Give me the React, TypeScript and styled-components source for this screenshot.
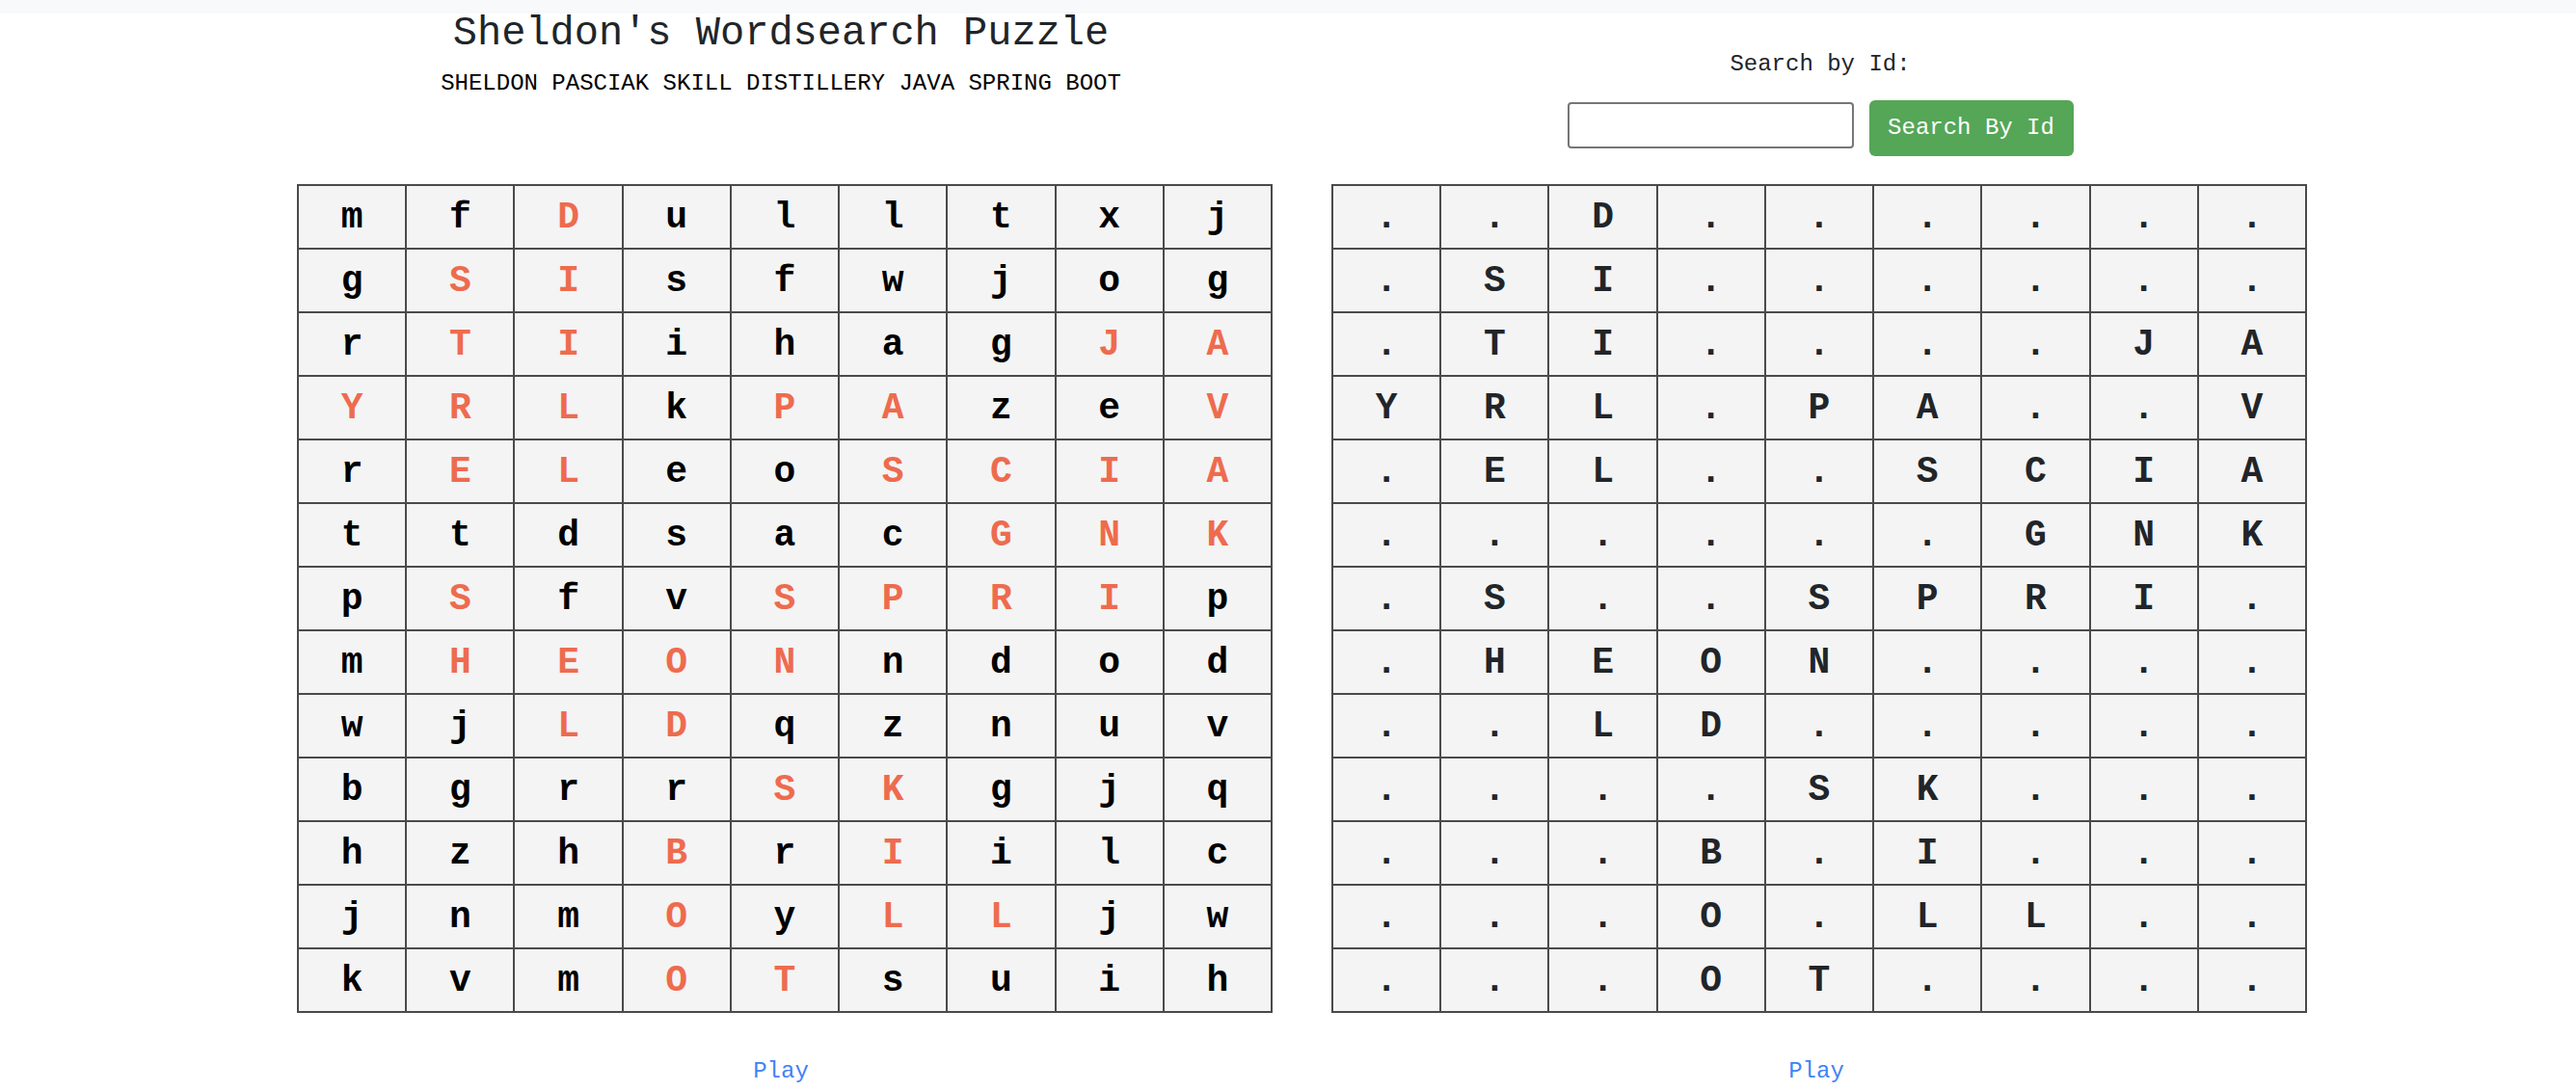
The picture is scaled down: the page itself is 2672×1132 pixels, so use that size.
import React from "react";
import styled, { createGlobalStyle } from "styled-components";

const PUZZLE = [
  "mfDulltxj",
  "gSIsfwjog",
  "rTIihagJA",
  "YRLkPAzeV",
  "rELeoSCIA",
  "ttdsacGNK",
  "pSfvSPRIp",
  "mHEONndod",
  "wjLDqznuv",
  "bgrrSKgjq",
  "hzhBrIilc",
  "jnmOyLLjw",
  "kvmOTsuih",
];

const isWordLetter = (ch: string) => ch !== ch.toLowerCase();

const GlobalStyle = createGlobalStyle`
  body {
    margin: 0;
    background: #fff;
    color: #212529;
    font-family: "Liberation Mono", "Courier New", monospace;
  }
`;

const TopBar = styled.div`
  height: 14px;
  background-color: #f8f9fa;
`;

const Columns = styled.div`
  display: grid;
  grid-template-columns: 1074px 1074px;
  padding-left: 273px;
`;

const Column = styled.section`
  display: flex;
  flex-direction: column;
  align-items: center;
`;

const Header = styled.header<{ $top: number; $shift?: number }>`
  height: 177px;
  box-sizing: border-box;
  padding-top: ${(p) => p.$top}px;
  padding-left: ${(p) => p.$shift ?? 0}px;
  display: flex;
  flex-direction: column;
  align-items: center;
  width: 100%;
`;

const Title = styled.h1`
  margin: 0;
  font-size: 42px;
  font-weight: 400;
  line-height: 1;
  color: #212529;
`;

const Subtitle = styled.p`
  margin: 17px 0 0;
  font-size: 24px;
  line-height: 1.2;
  color: #000;
`;

const Label = styled.label`
  margin-top: 1px;
  font-size: 24px;
  line-height: 1.2;
  color: #212529;
`;

const SearchRow = styled.form`
  display: flex;
  align-items: flex-start;
  gap: 16px;
  margin-top: 22px;
`;

const IdInput = styled.input`
  width: 297px;
  height: 48px;
  margin-top: 2px;
  box-sizing: border-box;
  border: 2px solid #767676;
  border-radius: 4px;
  font-family: inherit;
  font-size: 24px;
`;

const SearchButton = styled.button`
  width: 212px;
  height: 58px;
  border: none;
  border-radius: 6px;
  background-color: #55a656;
  color: #fff;
  font-family: "Liberation Mono", "Courier New", monospace;
  font-size: 24px;
`;

const Board = styled.table<{ $offset: number }>`
  align-self: flex-start;
  margin-left: ${(p) => p.$offset}px;
  width: 1012px;
  table-layout: fixed;
  border-collapse: collapse;
  border: 2px solid #4a4a4a;
`;

const Cell = styled.td<{ $hit: boolean; $solution?: boolean }>`
  height: 64px;
  padding: 0;
  border: 2px solid #4a4a4a;
  background-color: #f4f4f4;
  text-align: center;
  font-size: 38px;
  font-weight: 700;
  color: ${(p) => (p.$solution ? "#212529" : p.$hit ? "#ee6b4e" : "#000")};
`;

const PlayLink = styled.a`
  margin-top: 47px;
  font-size: 24px;
  line-height: 1.2;
  color: #3f83f5;
  text-decoration: none;
`;

const Grid = ({ solution }: { solution?: boolean }) => (
  <Board $offset={solution ? 34 : 35}>
    <tbody>
      {PUZZLE.map((row, r) => (
        <tr key={r}>
          {row.split("").map((ch, c) => {
            const hit = isWordLetter(ch);
            return (
              <Cell key={c} $hit={hit} $solution={solution}>
                {solution ? (hit ? ch : ".") : ch}
              </Cell>
            );
          })}
        </tr>
      ))}
    </tbody>
  </Board>
);

export default function App() {
  return (
    <>
      <GlobalStyle />
      <TopBar />
      <Columns>
        <Column>
          <Header $top={0}>
            <Title>Sheldon's Wordsearch Puzzle</Title>
            <Subtitle>SHELDON PASCIAK SKILL DISTILLERY JAVA SPRING BOOT</Subtitle>
          </Header>
          <Grid />
          <PlayLink href="#">Play</PlayLink>
        </Column>
        <Column>
          <Header $top={38} $shift={8}>
            <Label htmlFor="puzzle-id">Search by Id:</Label>
            <SearchRow onSubmit={(e) => e.preventDefault()}>
              <IdInput id="puzzle-id" type="text" />
              <SearchButton type="submit">Search By Id</SearchButton>
            </SearchRow>
          </Header>
          <Grid solution />
          <PlayLink href="#">Play</PlayLink>
        </Column>
      </Columns>
    </>
  );
}
